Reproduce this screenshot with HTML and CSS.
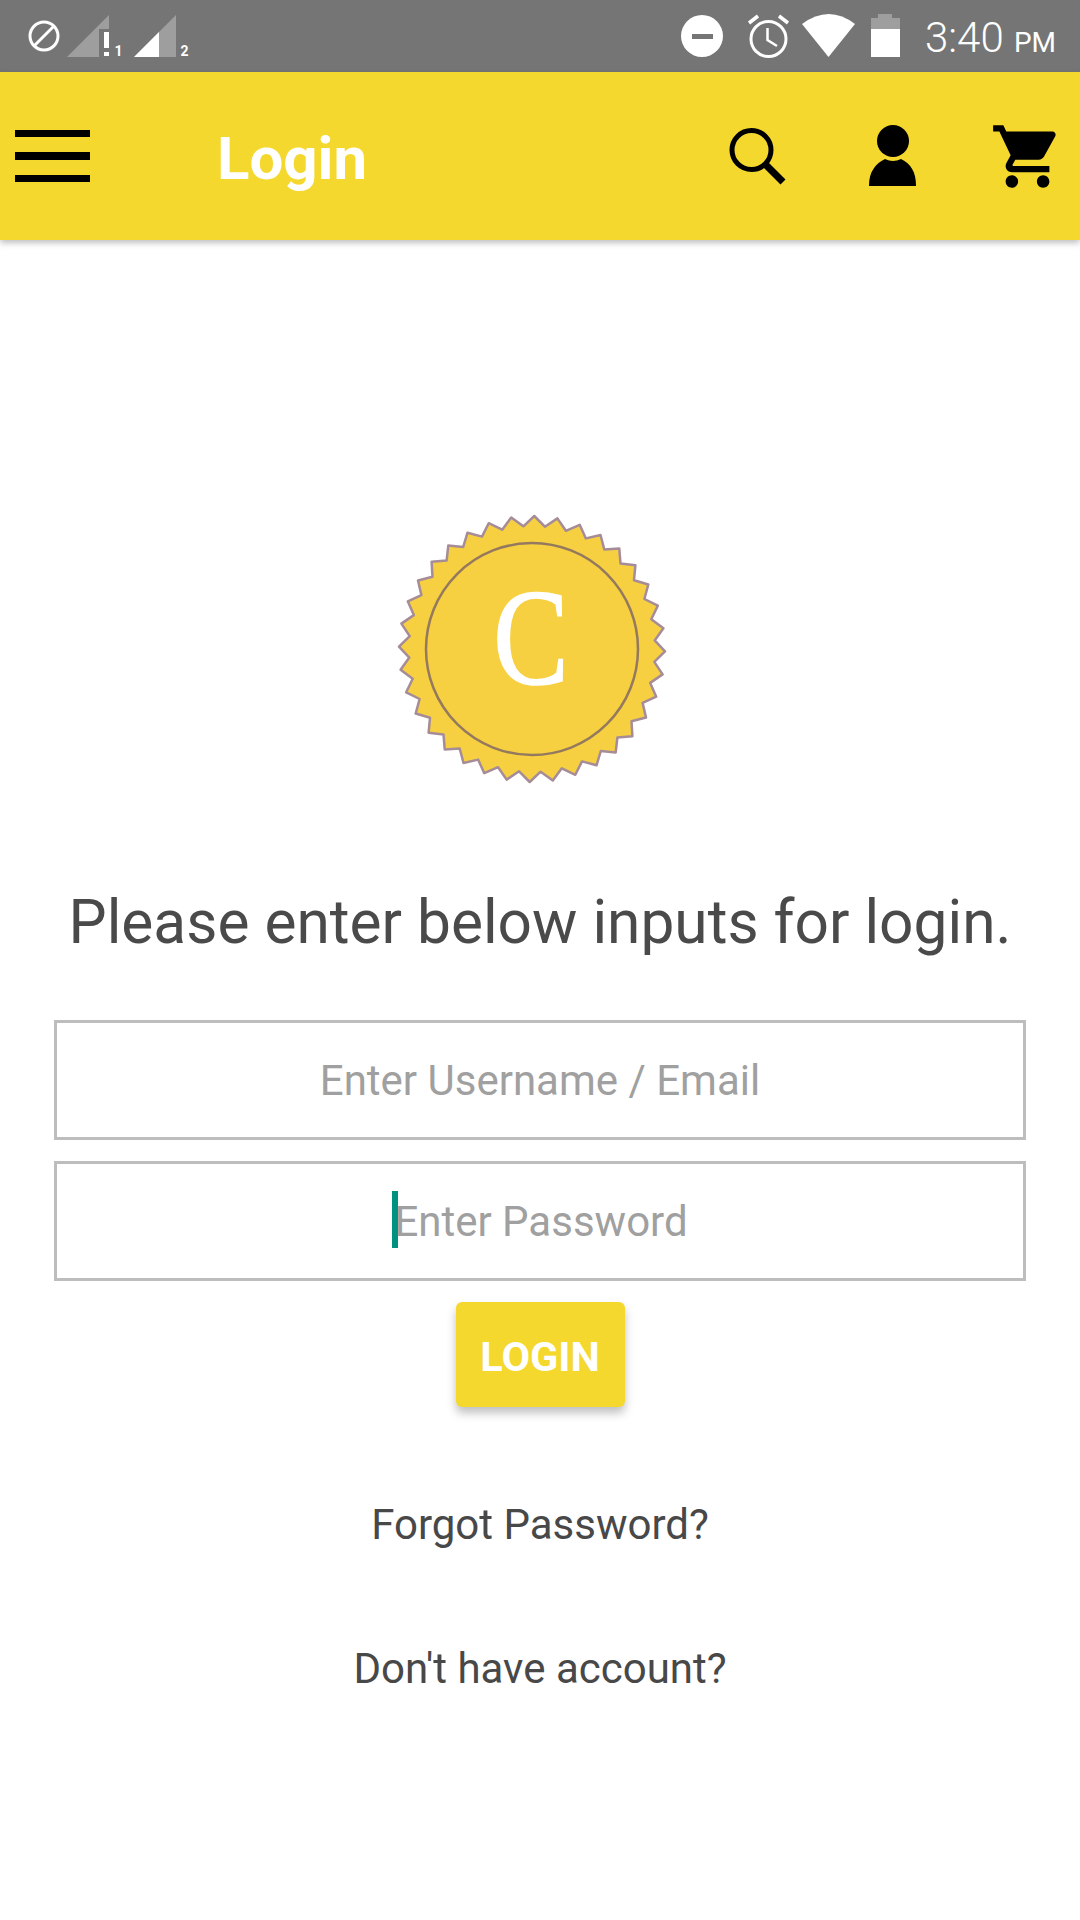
FILE: index.html
```html
<!DOCTYPE html>
<html lang="en">
<head>
  <meta charset="UTF-8">
  <title>Login</title>
  <link rel="stylesheet" href="styles.css">
</head>
<body>
  <div class="statusbar">
    <svg class="status-left" viewBox="0 0 190 72">
      <circle cx="44" cy="36" r="14" fill="none" stroke="#fff" stroke-width="3"/>
      <line x1="34" y1="46" x2="54" y2="26" stroke="#fff" stroke-width="3"/>
      <polygon points="67,57 109,15 109,29 99,29 99,57" fill="#9e9e9e"/>
      <rect x="104" y="32" width="5" height="16" fill="#fff"/>
      <rect x="104" y="52" width="5" height="4" fill="#fff"/>
      <text class="sim" x="114.500" y="55.500">1</text>
      <polygon points="134,57 176,15 176,57" fill="#9e9e9e"/>
      <polygon points="134,57 159,32 159,57" fill="#fff"/>
      <text class="sim" x="180.500" y="55.500">2</text>
    </svg>
    <svg class="status-right" viewBox="680 0 225 72">
      <circle cx="702" cy="36" r="21" fill="#fff"/>
      <rect x="692" y="34" width="21" height="5" fill="#757575"/>
      <circle cx="768.500" cy="39" r="17.500" fill="none" stroke="#fff" stroke-width="3"/>
      <path d="M749 23 L758 16 M779 16 L788 23" stroke="#fff" stroke-width="3.500" fill="none"/>
      <path d="M767.500 28 V40 L777 46" stroke="#fff" stroke-width="2.500" fill="none"/>
      <path d="M802 24 Q829 4 855 24 L828.500 57 Z" fill="#fff"/>
      <path d="M878 18 V14 H892 V18 H900 V29 H871 V18 Z" fill="#9e9e9e"/>
      <rect x="871" y="29" width="29" height="28" fill="#fff"/>
    </svg>
    <span class="clock">3:40 <small>PM</small></span>
  </div>

  <header class="appbar">
    <div class="menu"><i></i><i></i><i></i></div>
    <div class="title">Login</div>
    <svg class="icon-search" viewBox="0 0 60 60">
      <circle cx="24.500" cy="24" r="19.500" fill="none" stroke="#000" stroke-width="5"/>
      <line x1="38" y1="38" x2="56" y2="56" stroke="#000" stroke-width="7"/>
    </svg>
    <svg class="icon-user" viewBox="0 0 48 64">
      <circle cx="24" cy="17" r="16"/>
      <path d="M0 62 C0 48 6 40 16 35 Q24 39 32 35 C42 40 47 48 47 62 Z"/>
    </svg>
    <svg class="icon-cart" viewBox="0 0 24 24">
      <path d="M7 18c-1.100 0-1.990.900-1.990 2S5.900 22 7 22s2-.900 2-2-.900-2-2-2zM1 2v2h2l3.600 7.590-1.350 2.450c-.160.280-.250.610-.250.960 0 1.100.900 2 2 2h12v-2H7.420c-.140 0-.250-.110-.250-.250l.030-.120.900-1.630h7.450c.750 0 1.410-.410 1.750-1.030l3.580-6.490c.080-.140.120-.310.120-.480 0-.550-.450-1-1-1H5.210l-.940-2H1zm16 16c-1.100 0-1.990.900-1.990 2s.890 2 1.990 2 2-.900 2-2-.900-2-2-2z"/>
    </svg>
  </header>

  <main class="login">
    <svg class="logo" viewBox="0 0 280 280">
      <polygon id="seal" points="" fill="#f6d040" stroke="#a58c98" stroke-width="2.500" stroke-linejoin="round"/>
      <circle cx="140" cy="140" r="106" fill="none" stroke="#94795f" stroke-width="2.500"/>
      <text class="logo-letter" text-anchor="middle" transform="translate(139 175) scale(.82 1)">C</text>
    </svg>

    <h1>Please enter below inputs for login.</h1>

    <div class="field">Enter Username / Email</div>
    <div class="field"><i class="caret"></i>Enter Password</div>

    <button class="btn-login">LOGIN</button>

    <a class="link link-forgot">Forgot Password?</a>
    <a class="link link-signup">Don't have account?</a>
  </main>

  <script src="logo.js"></script>
</body>
</html>
```

FILE: styles.css
```css
* {
  box-sizing: border-box;
}
body {
  margin: 0;
  width: 1080px;
  height: 1920px;
  overflow: hidden;
  background-color: #ffffff;
  font-family: Roboto, sans-serif;
}
.statusbar {
  height: 72px;
  background-color: #757575;
  display: flex;
  align-items: center;
  color: #ffffff;
}
.status-left {
  width: 190px;
  height: 72px;
}
.status-right {
  width: 225px;
  height: 72px;
  margin-left: 490px;
}
.sim {
  font-size: 14px;
  font-weight: 700;
  fill: #ffffff;
}
.clock {
  margin-left: 20px;
  padding-top: 3px;
  font-size: 42px;
  font-weight: 300;
  white-space: nowrap;
}
.clock small {
  font-size: 28px;
  font-weight: 400;
}
.appbar {
  height: 168px;
  background-color: #f5d82e;
  box-shadow: 0 3px 6px rgba(0, 0, 0, 0.25);
  display: flex;
  align-items: center;
  position: relative;
}
.menu {
  width: 75px;
  margin-left: 15px;
  display: flex;
  flex-direction: column;
  gap: 15px;
}
.menu i {
  display: block;
  height: 7.500px;
  background-color: #000;
}
.title {
  margin-left: 127px;
  padding-top: 4px;
  width: 500px;
  font-size: 60px;
  font-weight: 700;
  color: #ffffff;
}
.icon-search {
  position: absolute;
  left: 727px;
  top: 54px;
  width: 60px;
  height: 60px;
}
.icon-user {
  position: absolute;
  left: 869px;
  top: 52px;
  width: 48px;
  height: 64px;
}
.icon-cart {
  position: absolute;
  left: 990px;
  top: 47px;
  width: 75px;
  height: 75px;
}
.login {
  display: flex;
  flex-direction: column;
  align-items: center;
  padding: 269px 54px 0;
}
.logo {
  width: 280px;
  height: 280px;
  margin-right: 16px;
  filter: blur(0.6px);
}
.logo-letter {
  font-family: "Liberation Serif", serif;
  font-size: 138px;
  fill: #ffffff;
  stroke: #ffffff;
  stroke-width: 1.500;
}
h1 {
  margin: 101px 0 0;
  font-size: 60.400px;
  font-weight: 400;
  line-height: 66px;
  color: #4a4a4a;
  white-space: nowrap;
}
.field {
  width: 972px;
  height: 120px;
  margin-top: 21px;
  border: 3px solid #bdbdbd;
  display: flex;
  align-items: center;
  justify-content: center;
  font-size: 42px;
  color: #a0a0a0;
}
h1 + .field {
  margin-top: 64px;
}
.caret {
  width: 6px;
  height: 57px;
  margin-right: -4px;
  margin-bottom: 3px;
  background-color: #00917f;
}
.btn-login {
  width: 169px;
  height: 105px;
  margin-top: 21px;
  padding-top: 4px;
  border: none;
  border-radius: 6px;
  background-color: #f5d82e;
  box-shadow: 0 6px 10px rgba(0, 0, 0, 0.25);
  color: #ffffff;
  font-family: Roboto, sans-serif;
  font-size: 41.500px;
  font-weight: 700;
}
.link {
  font-size: 42px;
  color: #484848;
}
.link-forgot {
  margin-top: 93px;
}
.link-signup {
  margin-top: 95px;
}
```

FILE: logo.js
```js
// seal edge: 36 teeth around the badge
var pts = [];
for (var i = 0; i < 72; i++) {
  var r = i % 2 === 0 ? 133 : 123;
  var a = (i * 5 - 89) * Math.PI / 180;
  pts.push((140 + r * Math.cos(a)).toFixed(1) + "," + (140 + r * Math.sin(a)).toFixed(1));
}
document.getElementById("seal").setAttribute("points", pts.join(" "));
```
